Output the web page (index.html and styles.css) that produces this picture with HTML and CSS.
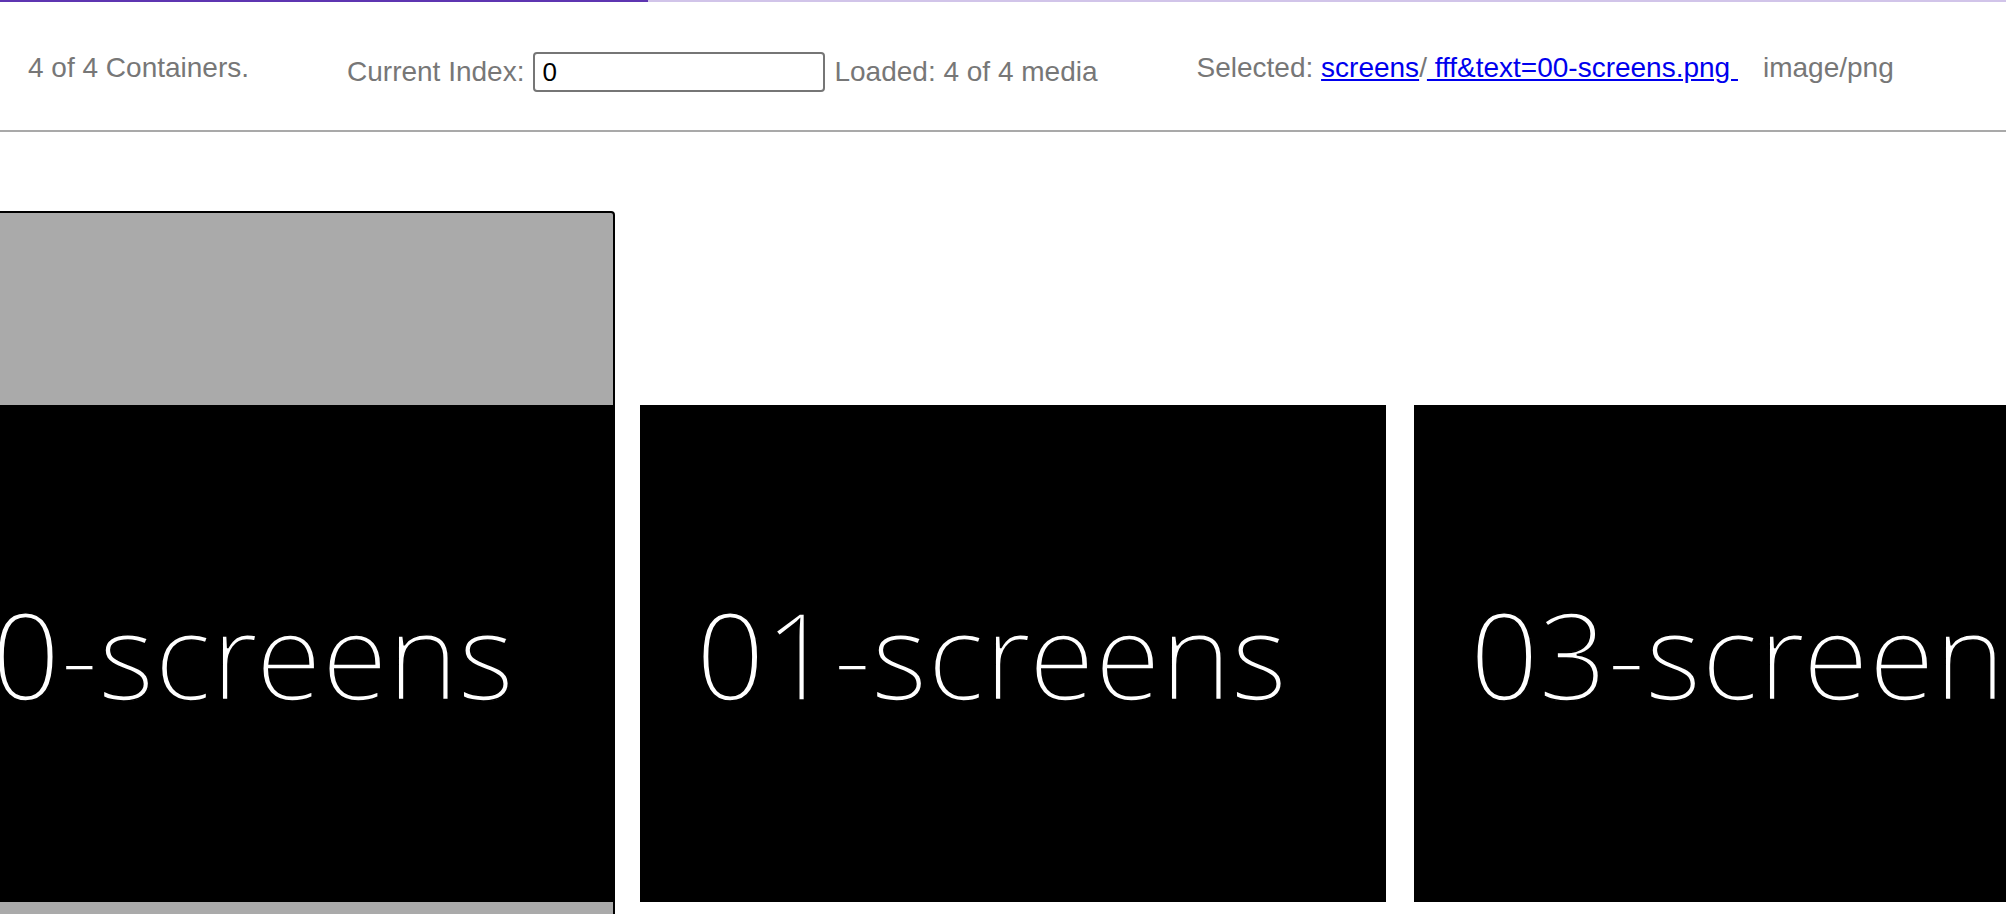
FILE: index.html
```html
<!DOCTYPE html>
<html lang="en">
<head>
<meta charset="utf-8">
<title>Containers</title>
<link rel="stylesheet" href="styles.css">
</head>
<body>
<div class="progress"><div class="progress-fill" style="width: 32.3%"></div></div>
<header class="toolbar">
  <span class="count">4 of 4 Containers.</span>
  <div class="index-group">
    <label class="label" for="idx">Current Index:</label>
    <input class="index-input" id="idx" type="text" value="0">
    <span class="loaded">Loaded: 4 of 4 media</span>
  </div>
  <div class="selected">Selected: <a class="link" href="#">screens</a>/<a class="link" href="#">&nbsp;fff&amp;text=00-screens.png&nbsp;</a><span class="mime">image/png</span></div>
</header>
<main class="strip">
  <div class="track">
    <div class="frame">
      <div class="shot">00-screens</div>
    </div>
    <div class="shot card">01-screens</div>
    <div class="shot card">03-screens</div>
    <div class="shot card">02-screens</div>
  </div>
</main>
</body>
</html>
```

FILE: styles.css
```css
html, body {
  margin: 0;
  padding: 0;
  overflow: hidden;
  background: #fff;
  width: 2006px;
  height: 914px;
}

body {
  font-family: "Liberation Sans", Arial, sans-serif;
}

.progress {
  height: 2px;
  background: #d1c4e9;
}

.progress-fill {
  height: 100%;
  background: #5e35b1;
}

.toolbar {
  display: flex;
  align-items: center;
  box-sizing: border-box;
  height: 130px;
  padding: 3px 0 0 28px;
  border-bottom: 2px solid #a9a9a9;
  font-size: 28px;
  color: #777;
  white-space: nowrap;
}

.index-group {
  display: flex;
  align-items: center;
  margin-left: 98px;
  margin-top: 9px;
}

.index-input {
  box-sizing: border-box;
  width: 292px;
  height: 40px;
  margin: 0 9px;
  padding: 0 0 0 7px;
  border: 2px solid #767676;
  border-radius: 4px;
  font-family: "Liberation Sans", Arial, sans-serif;
  font-size: 26px;
  color: #000;
  background: #fff;
  outline: none;
}

.selected {
  margin-left: 99px;
}

.link {
  color: #0000ee;
  text-decoration: underline;
}

.mime {
  margin-left: 25px;
}

.strip {
  overflow: hidden;
}

.track {
  display: flex;
  align-items: center;
  margin-left: -135px;
  margin-top: 79px;
}

.frame {
  flex: none;
  padding: 192px 0;
  border: 2px solid #000;
  border-radius: 4px;
  background: #aaa;
  margin-right: 25px;
}

.shot {
  flex: none;
  box-sizing: border-box;
  width: 746px;
  height: 497px;
  display: flex;
  align-items: center;
  padding-left: 56px;
  background: #000;
  color: #fff;
  font-family: "Open Sans Light", "Open Sans", "DejaVu Sans", sans-serif;
  font-weight: 300;
  font-size: 120px;
  white-space: nowrap;
  overflow: hidden;
  -webkit-text-stroke: 1.6px #000;
}

.card {
  margin-right: 28px;
}
```
